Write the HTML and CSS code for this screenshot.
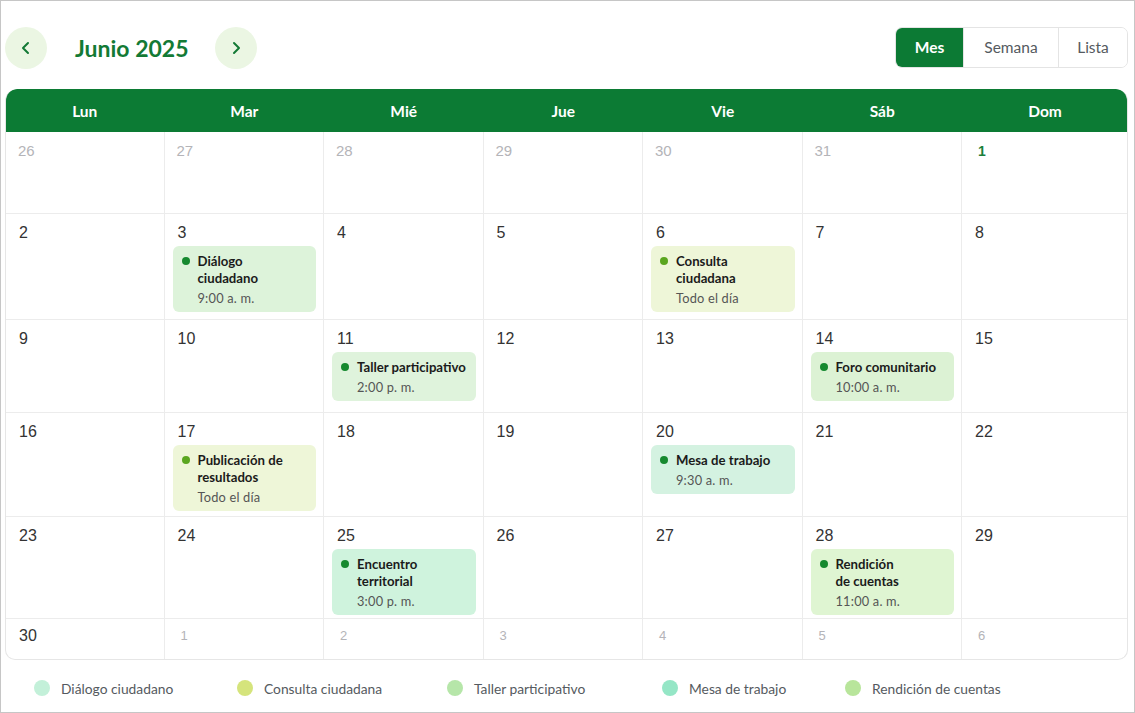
FILE: index.html
```html
<!DOCTYPE html>
<html lang="es">
<head>
<meta charset="utf-8">
<title>Calendario Junio 2025</title>
<link rel="stylesheet" href="styles.css">
</head>
<body>
<div class="app">
  <div class="toolbar">
    <div class="nav">
      <button class="nav-btn" aria-label="Anterior">
        <svg width="14" height="14" viewBox="0 0 14 14"><path d="M9 2 L4 7 L9 12" fill="none" stroke="#137a35" stroke-width="2" stroke-linecap="round" stroke-linejoin="round"/></svg>
      </button>
      <h1 class="title">Junio 2025</h1>
      <button class="nav-btn" aria-label="Siguiente">
        <svg width="14" height="14" viewBox="0 0 14 14"><path d="M5 2 L10 7 L5 12" fill="none" stroke="#137a35" stroke-width="2" stroke-linecap="round" stroke-linejoin="round"/></svg>
      </button>
    </div>
    <div class="views">
      <button class="view active">Mes</button>
      <button class="view">Semana</button>
      <button class="view">Lista</button>
    </div>
  </div>

  <div class="calendar">
    <div class="head">
      <div>Lun</div><div>Mar</div><div>Mié</div><div>Jue</div><div>Vie</div><div>Sáb</div><div>Dom</div>
    </div>
    <div class="grid">
      <!-- row 1 -->
      <div class="cell"><span class="num other">26</span></div>
      <div class="cell"><span class="num other">27</span></div>
      <div class="cell"><span class="num other">28</span></div>
      <div class="cell"><span class="num other">29</span></div>
      <div class="cell"><span class="num other">30</span></div>
      <div class="cell"><span class="num other">31</span></div>
      <div class="cell last"><span class="num first">1</span></div>
      <!-- row 2 -->
      <div class="cell"><span class="num">2</span></div>
      <div class="cell"><span class="num">3</span>
        <div class="event ev-dialogo"><div class="ev-title"><i class="dot"></i><span>Diálogo<br>ciudadano</span></div><div class="ev-time">9:00 a. m.</div></div>
      </div>
      <div class="cell"><span class="num">4</span></div>
      <div class="cell"><span class="num">5</span></div>
      <div class="cell"><span class="num">6</span>
        <div class="event ev-consulta"><div class="ev-title"><i class="dot light"></i><span>Consulta<br>ciudadana</span></div><div class="ev-time">Todo el día</div></div>
      </div>
      <div class="cell"><span class="num">7</span></div>
      <div class="cell last"><span class="num">8</span></div>
      <!-- row 3 -->
      <div class="cell"><span class="num">9</span></div>
      <div class="cell"><span class="num">10</span></div>
      <div class="cell"><span class="num">11</span>
        <div class="event ev-taller"><div class="ev-title"><i class="dot"></i><span>Taller participativo</span></div><div class="ev-time">2:00 p. m.</div></div>
      </div>
      <div class="cell"><span class="num">12</span></div>
      <div class="cell"><span class="num">13</span></div>
      <div class="cell"><span class="num">14</span>
        <div class="event ev-foro"><div class="ev-title"><i class="dot"></i><span>Foro comunitario</span></div><div class="ev-time">10:00 a. m.</div></div>
      </div>
      <div class="cell last"><span class="num">15</span></div>
      <!-- row 4 -->
      <div class="cell"><span class="num">16</span></div>
      <div class="cell"><span class="num">17</span>
        <div class="event ev-consulta"><div class="ev-title"><i class="dot light"></i><span>Publicación de<br>resultados</span></div><div class="ev-time">Todo el día</div></div>
      </div>
      <div class="cell"><span class="num">18</span></div>
      <div class="cell"><span class="num">19</span></div>
      <div class="cell"><span class="num">20</span>
        <div class="event ev-mesa"><div class="ev-title"><i class="dot"></i><span>Mesa de trabajo</span></div><div class="ev-time">9:30 a. m.</div></div>
      </div>
      <div class="cell"><span class="num">21</span></div>
      <div class="cell last"><span class="num">22</span></div>
      <!-- row 5 -->
      <div class="cell"><span class="num">23</span></div>
      <div class="cell"><span class="num">24</span></div>
      <div class="cell"><span class="num">25</span>
        <div class="event ev-encuentro"><div class="ev-title"><i class="dot"></i><span>Encuentro<br>territorial</span></div><div class="ev-time">3:00 p. m.</div></div>
      </div>
      <div class="cell"><span class="num">26</span></div>
      <div class="cell"><span class="num">27</span></div>
      <div class="cell"><span class="num">28</span>
        <div class="event ev-rendicion"><div class="ev-title"><i class="dot"></i><span>Rendición<br>de cuentas</span></div><div class="ev-time">11:00 a. m.</div></div>
      </div>
      <div class="cell last"><span class="num">29</span></div>
      <!-- row 6 -->
      <div class="cell bottom"><span class="num">30</span></div>
      <div class="cell bottom"><span class="num other small">1</span></div>
      <div class="cell bottom"><span class="num other small">2</span></div>
      <div class="cell bottom"><span class="num other small">3</span></div>
      <div class="cell bottom"><span class="num other small">4</span></div>
      <div class="cell bottom"><span class="num other small">5</span></div>
      <div class="cell bottom last"><span class="num other small">6</span></div>
    </div>
  </div>

  <div class="legend">
    <div class="leg"><i class="sw sw-dialogo"></i>Diálogo ciudadano</div>
    <div class="leg"><i class="sw sw-consulta"></i>Consulta ciudadana</div>
    <div class="leg"><i class="sw sw-taller"></i>Taller participativo</div>
    <div class="leg"><i class="sw sw-mesa"></i>Mesa de trabajo</div>
    <div class="leg"><i class="sw sw-rendicion"></i>Rendición de cuentas</div>
  </div>
</div>
</body>
</html>
```

FILE: styles.css
```css
* { box-sizing: border-box; }
html, body { margin: 0; padding: 0; background: #fff; }
body { font-family: Lato, "Open Sans", Arial, sans-serif; color: #222; }

.app {
  width: 1135px;
  height: 713px;
  border: 1px solid #c6c6c6;
  padding: 26px 6px 0 4px;
  overflow: hidden;
}

.toolbar {
  display: flex;
  justify-content: space-between;
  align-items: center;
  height: 42px;
}
.nav { display: flex; align-items: center; }
.nav-btn {
  width: 42px; height: 42px;
  border-radius: 50%;
  border: none;
  background: #ebf6e3;
  display: flex; align-items: center; justify-content: center;
  padding: 0;
  cursor: pointer;
}
.title {
  margin: 0 26px 0 28px;
  font-size: 23px;
  font-weight: 700;
  color: #137a35;
  letter-spacing: 0;
}
.views {
  display: flex;
  height: 41px;
  margin-top: -2px;
  border: 1px solid #e4e4e4;
  border-radius: 7px;
  overflow: hidden;
}
.view {
  font-family: Lato, Arial, sans-serif;
  font-size: 15.5px;
  color: #555a60;
  background: #fff;
  border: none;
  border-left: 1px solid #e4e4e4;
  padding: 0;
  cursor: pointer;
}
.view:nth-child(1) { width: 67px; border-left: none; }
.view:nth-child(2) { width: 95px; }
.view:nth-child(3) { width: 69px; }
.view.active { background: #0c7a34; color: #fff; font-weight: 700; }

.calendar {
  margin-top: 20px;
  border: 1px solid #e6e6e6;
  border-top: none;
  border-radius: 12px 12px 10px 10px;
  overflow: hidden;
}
.head, .grid {
  display: grid;
  grid-template-columns: repeat(6, 159.5px) 1fr;
}
.head {
  height: 43px;
  margin: 0 -1px;
  background: #0c7b34;
  color: #fff;
  font-weight: 700;
  font-size: 15.5px;
  align-items: center;
  text-align: center;
  border-radius: 12px 12px 0 0;
}
.grid {
  margin-left: -1px;
  grid-template-rows: 82px 106px 93px 104px 102px 40px;
}
.cell {
  border-right: 1px solid #ececec;
  border-bottom: 1px solid #ececec;
  display: flex;
  flex-direction: column;
  padding-top: 9px;
}
.cell:nth-child(7n+1) { padding-left: 1px; }
.cell.last { border-right: none; }
.cell.bottom { border-bottom: none; padding-top: 7px; }

.num {
  font-family: "Liberation Sans", Arial, sans-serif;
  font-size: 16px;
  line-height: 20px;
  color: #333;
  padding-left: 13px;
}
.num.other { color: #b4b4b8; font-size: 15px; padding-left: 12px; }
.num.small { font-size: 13px; padding-left: 16px; }
.num.first { color: #1b7f3b; font-size: 14px; font-weight: 700; padding-left: 16px; }

.event {
  margin: 3px 7px 0 8px;
  border-radius: 6px;
  padding: 7px 8px 6px 9px;
}
.ev-title {
  display: flex;
  align-items: flex-start;
  font-size: 13.2px;
  font-weight: 700;
  line-height: 17px;
  color: #1b1b1b;
}
.dot {
  flex: none;
  width: 8px; height: 8px;
  border-radius: 50%;
  background: #16892f;
  margin: 4px 8px 0 0;
}
.dot.light { background: #5aa61f; }
.ev-time {
  margin-top: 3px;
  padding-left: 16px;
  font-size: 12.8px;
  line-height: 16px;
  color: #555;
  letter-spacing: 0.2px;
}
.ev-dialogo { background: #ddf3da; }
.ev-consulta { background: #eef6d8; }
.ev-taller { background: #dff3dc; }
.ev-foro { background: #dcf2d4; }
.ev-mesa { background: #d4f2e1; }
.ev-encuentro { background: #cff3dd; }
.ev-rendicion { background: #dff5d2; }

.legend {
  display: flex;
  align-items: center;
  padding-left: 29px;
  margin-top: 20px;
  height: 16px;
}
.leg {
  display: flex;
  align-items: center;
  gap: 11px;
  font-size: 13.8px;
  color: #555a60;
}
.leg:nth-child(1) { width: 203px; }
.leg:nth-child(2) { width: 210px; }
.leg:nth-child(3) { width: 215px; }
.leg:nth-child(4) { width: 183px; }
.sw { width: 16px; height: 16px; border-radius: 50%; display: block; flex: none; }
.sw-dialogo { background: #c3f0d9; }
.sw-consulta { background: #d5e47c; }
.sw-taller { background: #b6e6a9; }
.sw-mesa { background: #95e6c6; }
.sw-rendicion { background: #b8e59b; }
```
